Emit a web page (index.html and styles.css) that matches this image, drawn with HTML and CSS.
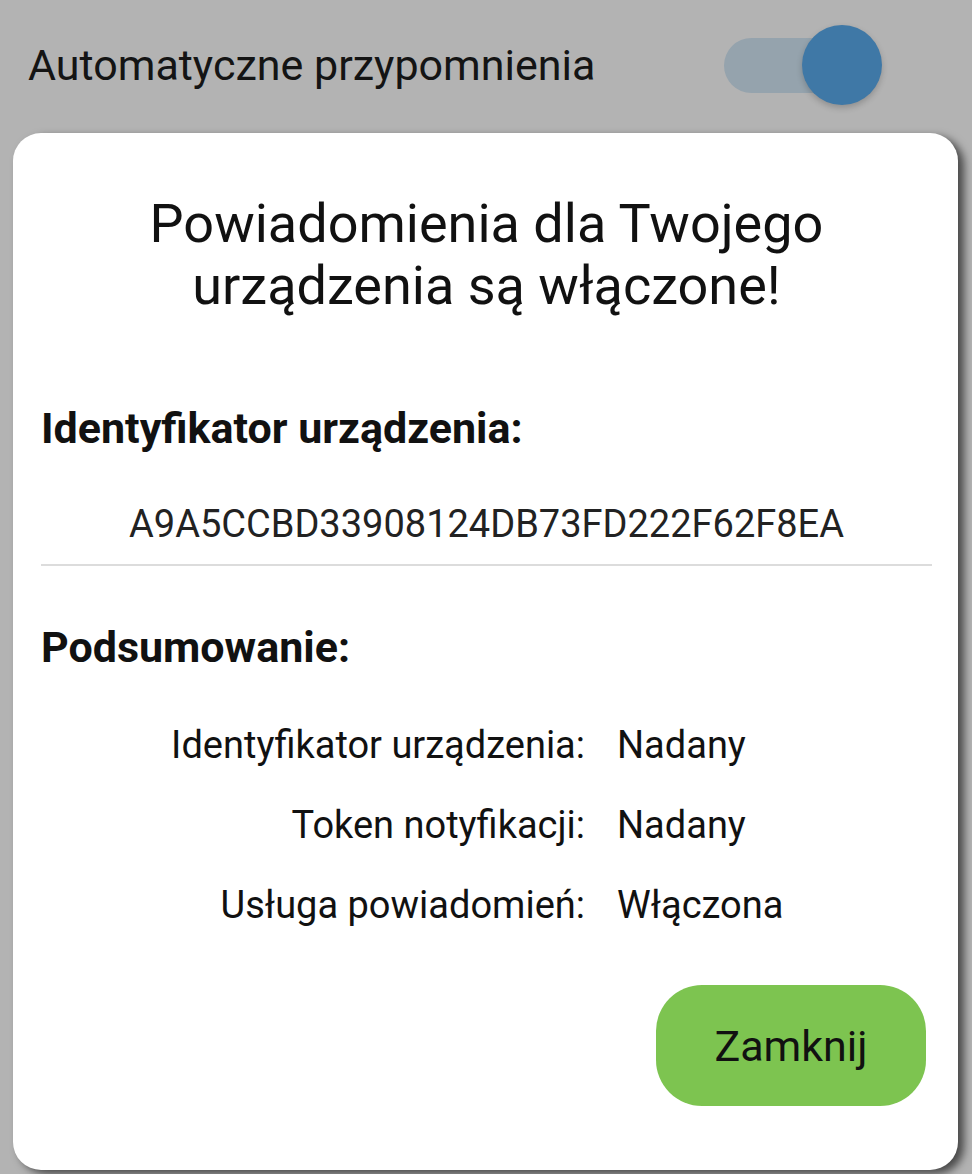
FILE: index.html
```html
<!DOCTYPE html>
<html>
<head>
  <title>Powiadomienia</title>
  <link rel="stylesheet" href="styles.css">
</head>
<body>

  <div class="setting">
    <span class="setting-label">Automatyczne przypomnienia</span>
    <div class="toggle">
      <div class="toggle-track"></div>
      <div class="toggle-thumb"></div>
    </div>
  </div>

  <div class="dialog">
    <h2 class="dialog-title">Powiadomienia dla Twojego urządzenia są włączone!</h2>

    <h3 class="section-title">Identyfikator urządzenia:</h3>
    <div class="device-id">A9A5CCBD33908124DB73FD222F62F8EA</div>
    <div class="divider"></div>

    <h3 class="section-title summary-title">Podsumowanie:</h3>
    <div class="summary">
      <span class="summary-label">Identyfikator urządzenia:</span>
      <span class="summary-value">Nadany</span>
      <span class="summary-label">Token notyfikacji:</span>
      <span class="summary-value">Nadany</span>
      <span class="summary-label">Usługa powiadomień:</span>
      <span class="summary-value">Włączona</span>
    </div>

    <div class="actions">
      <button class="close-btn">Zamknij</button>
    </div>
  </div>

</body>
</html>
```

FILE: styles.css
```css
body {
  margin: 0;
  background: #b3b3b3;
  font-family: Roboto, "Noto Sans", sans-serif;
  color: #111;
  height: 1174px;
  overflow: hidden;
}

.setting {
  height: 130px;
  display: flex;
  align-items: center;
  justify-content: space-between;
  padding: 0 90px 0 28px;
}

.setting-label {
  font-size: 43px;
  color: #141414;
}

.toggle {
  position: relative;
  width: 158px;
  height: 80px;
}

.toggle-track {
  position: absolute;
  left: 0;
  top: 13px;
  width: 130px;
  height: 55px;
  border-radius: 28px;
  background: #95a3ad;
}

.toggle-thumb {
  position: absolute;
  right: 0;
  top: 0;
  width: 80px;
  height: 80px;
  border-radius: 50%;
  background: #3f78a6;
  box-shadow: 0 3px 6px rgba(0, 0, 0, 0.2);
}

.dialog {
  margin: 3px 0 0 13px;
  width: 945px;
  height: 1037px;
  box-sizing: border-box;
  background: #fff;
  border-radius: 28px;
  box-shadow: 6px 4px 8px rgba(0, 0, 0, 0.6);
  padding: 60px 26px 0 28px;
}

.dialog-title {
  margin: 0;
  text-align: center;
  font-size: 54px;
  line-height: 62px;
  font-weight: normal;
  padding: 0 50px;
}

.section-title {
  margin: 86px 0 0;
  font-size: 43px;
  line-height: 50px;
  font-weight: bold;
}

.device-id {
  margin-top: 48px;
  text-align: center;
  font-size: 38px;
  line-height: 46px;
  color: #222;
}

.divider {
  margin-top: 17px;
  height: 2px;
  background: #dcdcdc;
}

.summary-title {
  margin-top: 56px;
}

.summary {
  display: grid;
  grid-template-columns: 544px auto;
  column-gap: 32px;
  row-gap: 30px;
  margin-top: 48px;
  font-size: 38px;
  line-height: 50px;
}

.summary-label {
  text-align: right;
}

.actions {
  display: flex;
  justify-content: flex-end;
  margin-top: 55px;
  padding-right: 6px;
}

.close-btn {
  width: 270px;
  height: 121px;
  border: none;
  border-radius: 46px;
  background: #7dc450;
  font-family: Roboto, sans-serif;
  font-size: 43px;
  color: #111;
}
```
